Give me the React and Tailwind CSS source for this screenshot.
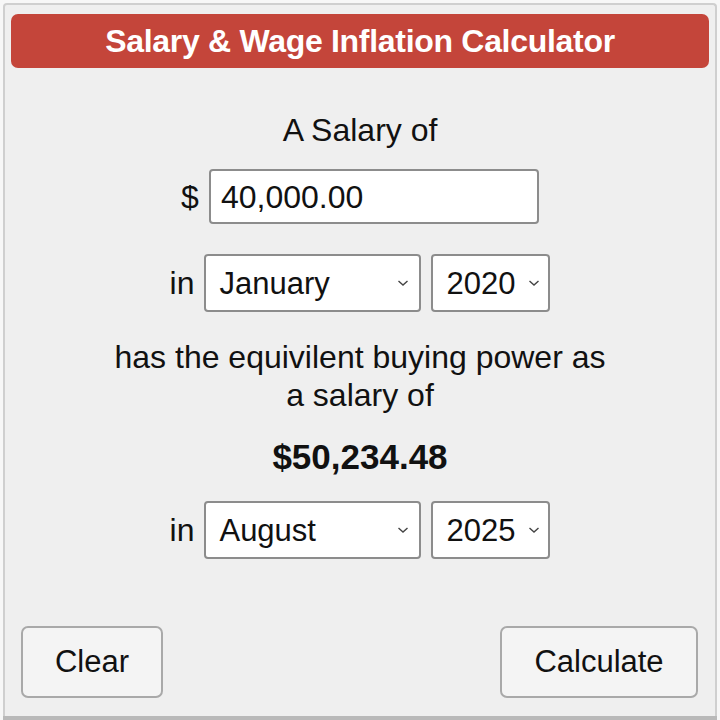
import React, { useState } from "react";

const font = { fontFamily: '"Liberation Sans", Arial, sans-serif' };

function Chevron() {
  return (
    <svg width="12" height="8" viewBox="0 0 12 8" className="shrink-0">
      <path d="M1.5 2 L6 6 L10.5 2" fill="none" stroke="#444" strokeWidth="1.4" />
    </svg>
  );
}

function Select({ value, width, padRight }) {
  return (
    <div
      className={`flex items-center h-[58px] bg-white border-2 border-[#8c8c8c] rounded-[4px] pl-[13px] text-[31px] text-[#111] ${width} ${padRight}`}
    >
      <span className="flex-1 leading-none">{value}</span>
      <Chevron />
    </div>
  );
}

export default function App() {
  const [amount] = useState("40,000.00");
  return (
    <div style={font} className="w-[720px] h-[720px] bg-[#f7f7f7] overflow-hidden pt-[3px] px-[3px]">
      <div className="h-[713px] border-x-2 border-t-2 border-[#cfcfcf] rounded-t-[4px] bg-[#efefef] flex flex-col items-center">
        <div className="self-stretch mx-[6px] mt-[9px] h-[54px] rounded-[7px] bg-[#c4453a] flex items-center justify-center text-white font-bold text-[32px] tracking-[-0.3px]">
          Salary &amp; Wage Inflation Calculator
        </div>

        <div className="mt-[45px] text-[32px] leading-[34px] text-[#111]">A Salary of</div>

        <div className="mt-[22px] flex items-center gap-[10px] text-[32px] text-[#111]">
          <span>$</span>
          <div className="w-[330px] h-[55px] bg-white border-2 border-[#8c8c8c] rounded-[4px] flex items-center pl-[10px] leading-none">
            {amount}
          </div>
        </div>

        <div className="mt-[30px] flex items-center gap-[10px] text-[32px] text-[#111]">
          <span>in</span>
          <Select value="January" width="w-[217px]" padRight="pr-[10px]" />
          <Select value="2020" width="w-[119px]" padRight="pr-[8px]" />
        </div>

        <div className="mt-[26px] text-[32px] leading-[38px] text-center text-[#111]">
          has the equivilent buying power as
          <br />a salary of
        </div>

        <div className="mt-[24px] text-[35px] leading-[38px] font-bold text-[#111]">$50,234.48</div>

        <div className="mt-[25px] flex items-center gap-[10px] text-[32px] text-[#111]">
          <span>in</span>
          <Select value="August" width="w-[217px]" padRight="pr-[10px]" />
          <Select value="2025" width="w-[119px]" padRight="pr-[8px]" />
        </div>

        <div className="self-stretch mt-[67px] flex justify-between pl-[16px] pr-[17px]">
          <button className="w-[142px] h-[72px] bg-[#f4f4f4] border-2 border-[#a9a9a9] rounded-[7px] text-[31px] text-[#111]">
            Clear
          </button>
          <button className="w-[198px] h-[72px] bg-[#f4f4f4] border-2 border-[#a9a9a9] rounded-[7px] text-[31px] text-[#111]">
            Calculate
          </button>
        </div>
      </div>
      <div className="h-[4px] bg-[#b9b9b9]" />
    </div>
  );
}
